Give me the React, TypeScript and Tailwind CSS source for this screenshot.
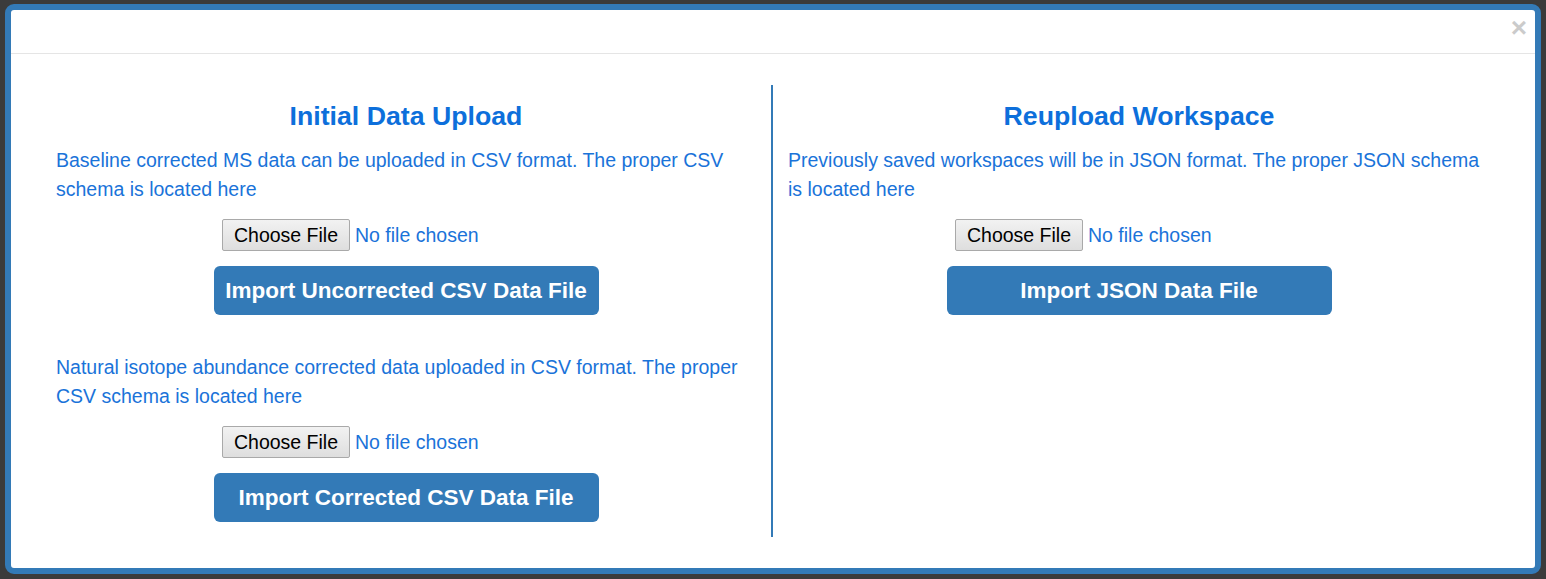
import React from "react";

function FileRow() {
  return (
    <div className="mx-auto mt-[15px] flex w-[368px] items-center gap-[5px]">
      <div className="flex h-[32px] w-[128px] items-center justify-center rounded-[2px] border border-[#a9a9a9] bg-gradient-to-b from-[#f2f2f2] to-[#dedede] pt-[1px] text-[19.5px] text-black">
        Choose File
      </div>
      <span className="pt-[1px] text-[19.5px] text-[#1a73d9]">No file chosen</span>
    </div>
  );
}

function ImportButton({ label }: { label: string }) {
  return (
    <div className="mx-auto mt-[15px] flex h-[49px] w-[385px] items-center justify-center rounded-[6px] bg-[#337ab7] text-[22.5px] font-bold text-white">
      {label}
    </div>
  );
}

function Title({ children }: { children: React.ReactNode }) {
  return <h3 className="pt-4 text-center text-[26.7px] font-bold leading-[30px] text-[#0d6fdb]">{children}</h3>;
}

function Para({ children, className = "" }: { children: React.ReactNode; className?: string }) {
  return <p className={`text-[19.5px] leading-[29px] text-[#1a73d9] ${className}`}>{children}</p>;
}

export default function App() {
  return (
    <div
      className="flex h-[579px] w-[1546px] items-start bg-[#3b3b3b] pl-[5px] pt-[4px]"
      style={{ fontFamily: '"Liberation Sans", Arial, sans-serif' }}
    >
      <div className="flex h-[570px] w-[1536px] flex-col rounded-[9px] border-[6px] border-[#337ab7] bg-white">
        {/* Header */}
        <div className="flex h-[44px] shrink-0 items-start justify-end border-b border-[#e5e5e5] pr-[8px] pt-[5px]">
          <span className="text-[28px] font-bold leading-[26px] text-black opacity-20">×</span>
        </div>

        {/* Body */}
        <div className="grid flex-1 grid-cols-[717px_717px] px-[45px] py-[31px]">
          <div className="border-r-2 border-[#337ab7] pb-[15px] pr-[15px]">
            <Title>Initial Data Upload</Title>
            <Para className="mt-[15px]">
              Baseline corrected MS data can be uploaded in CSV format. The proper CSV schema is located here
            </Para>
            <FileRow />
            <ImportButton label="Import Uncorrected CSV Data File" />
            <Para className="mt-[38px]">
              Natural isotope abundance corrected data uploaded in CSV format. The proper CSV schema is located here
            </Para>
            <FileRow />
            <ImportButton label="Import Corrected CSV Data File" />
          </div>

          <div className="pl-[15px]">
            <Title>Reupload Workspace</Title>
            <Para className="mt-[15px]">
              Previously saved workspaces will be in JSON format. The proper JSON schema is located here
            </Para>
            <FileRow />
            <ImportButton label="Import JSON Data File" />
          </div>
        </div>
      </div>
    </div>
  );
}
